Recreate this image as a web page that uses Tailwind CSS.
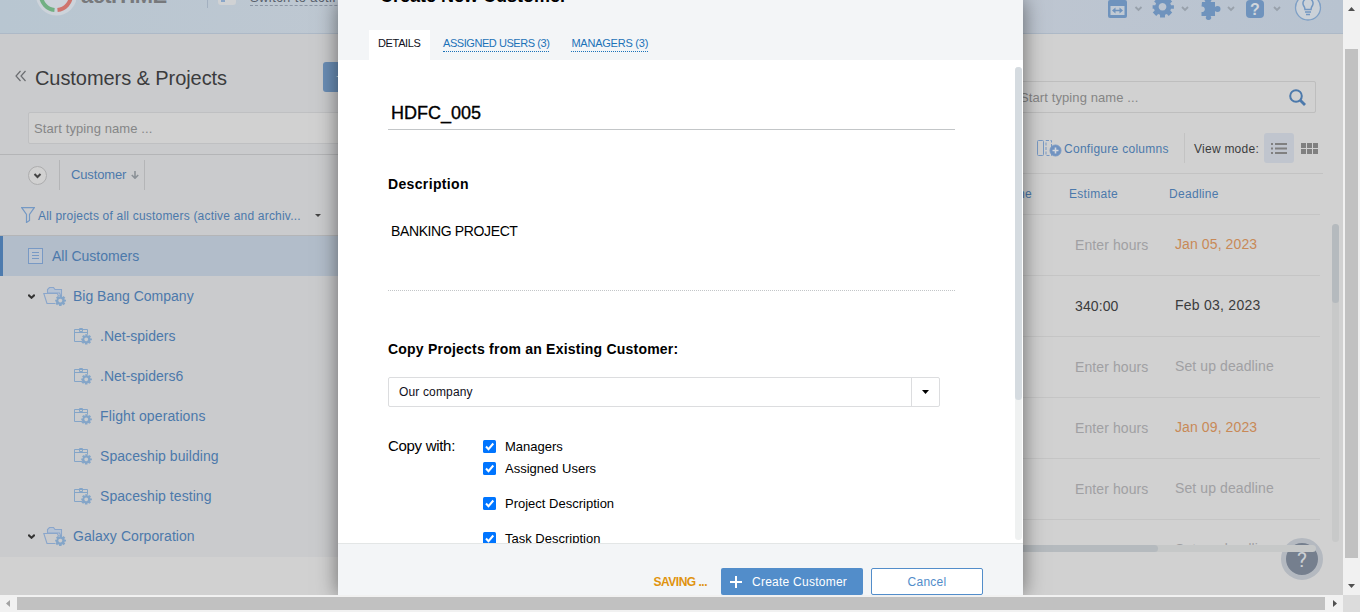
<!DOCTYPE html>
<html lang="en">
<head>
<meta charset="utf-8">
<title>actiTIME - Create New Customer</title>
<script src="https://cdn.jsdelivr.net/npm/@tailwindcss/browser@4"></script>
</head>
<body class="w-[1360px] h-[612px] overflow-hidden font-['Liberation_Sans',Arial,sans-serif] text-[13px] text-[#3b3c3d] whitespace-nowrap">
<svg class="hidden">
  <defs>
    <g id="cog"><path fill="currentColor" fill-rule="evenodd" d="M-1.300-5h2.600v1.400l1 .4 1-1 1.800 1.800-1 1 .4 1H6v1.800H4.500l-.4 1 1 1-1.800 1.800-1-1-1 .4V6h-2.600V4.600l-1-.4-1 1-1.800-1.800 1-1-.4-1H-5.200V-.4h1.400l.4-1-1-1 1.800-1.800 1 1 1-.4zM0-1.600a2 2 0 1 0 .01 0z"/></g>
    <g id="project" fill="none" stroke="#84a5c8" stroke-width="1"><path d="M8 13.500H.5V1.500h13v5M.5 4.500h13M5.500 .5v3h3v-3h-3z"/><g transform="translate(12.200 10.900) scale(.95)" color="#84a5c8" stroke="none"><use href="#cog"/></g></g>
    <g id="folder" fill="none" stroke="#8aa6cb" stroke-width="1.100"><path fill="#b5c2d4" d="M4.500 6V2.500l2-2h4l1.500 2h6.500v8l-2-4.500z"/><path fill="#cacbcd" d="M12 16.500H4L.8 6.500h13.500l1.500 3"/><g transform="translate(17.300 13.200) scale(.98)" color="#84a5c8" stroke="none"><use href="#cog"/></g></g>
    <path id="chev" d="M1 1l3 3 3-3" fill="none" stroke="#98a1ab" stroke-width="1.800"/>
    <path id="tri" d="M.3.800L3.500 3.800 6.700.800" fill="none" stroke="#333" stroke-width="2"/>
  </defs>
</svg>
<div class="grid grid-cols-[1343px_17px] grid-rows-[595px_17px]">
  <div class="relative flex flex-col overflow-hidden bg-[#d1d1d1]">
    <header class="flex h-[34px] shrink-0 items-end justify-between border-b border-[#adb9c7] bg-linear-to-r from-[#b8c6d1] via-[#c4c9d2] to-[#b8c3d0]">
      <div class="flex h-[52px] items-start pl-9">
        <svg class="h-[52px] w-10 shrink-0" viewBox="0 -19 40 52"><circle cx="20.500" cy="-5" r="20.500" fill="#cdd3da"/><g fill="none" stroke-width="4"><path d="M5 -5A15 15 0 0 0 18.500 10" stroke="#72b083"/><path d="M21.500 10A15 15 0 0 0 35 -5" stroke="#cf746d"/></g></svg>
        <span class="mt-[3px] ml-[5px] w-[126px] text-[22px] leading-6 font-bold tracking-[-0.6px] text-[#77797c]">actiTIME</span>
        <span class="h-[27px] border-l border-[#a3b0c0]"></span>
        <span class="mt-[6px] ml-[10px] flex h-[18px] w-[18px] items-end rounded-[3px] bg-[#d0d2d4] pb-[3px] pl-[3px]"><span class="h-2 w-1 bg-[#8aa6c8]"></span></span>
        <span class="mt-[9px] ml-[14px] border-b border-dashed border-[#8c96a5] text-[13px] leading-[15px] tracking-[0.4px] text-[#59606c]">Switch to actiPLANS</span>
      </div>
      <svg class="h-[34px] w-[250px] shrink-0" viewBox="1093 0 250 34">
        <g fill="#6f93bd" color="#6f93bd">
          <path d="M1108 3q0-2 2-2h15q2 0 2 2v14q0 2-2 2h-15q-2 0-2-2zM1111-3h3v5h-3zM1121-3h3v5h-3z"/><path d="M1110.500 7h14v9h-14z" fill="#c1cad4"/><path d="M1115.500 8.500l-3.500 3 3.500 3v-2.200h4v2.200l3.500-3-3.500-3v2.200h-4z"/>
          <g transform="translate(1162.500 7) scale(1.900)"><use href="#cog"/></g>
          <path d="M1202 3h3.500q-1-1-1-2.500a3.500 3.500 0 0 1 7 0q0 1.500-1 2.500h4.500v5q1-1 2.500-1a3 3 0 0 1 0 6q-1.500 0-2.500-1v5h-4.500q1 1 .6 2.500a2.900 2.900 0 0 1-5.200 0q-.4-1.500.6-2.500h-5v-4a2.800 2.800 0 1 0 0-5.500z"/>
          <rect x="1246" y="1" width="18" height="18" rx="4"/>
        </g>
        <text x="1255" y="15.500" text-anchor="middle" font-size="16" font-weight="700" fill="#d0d6dc">?</text>
        <g><use href="#chev" x="1134.500" y="7"/><use href="#chev" x="1181" y="7"/><use href="#chev" x="1227" y="7"/><use href="#chev" x="1273" y="7"/></g>
        <circle cx="1308" cy="8.500" r="12.500" fill="#cbd1d8" stroke="#7fa0c6" stroke-width="1.300"/>
        <path d="M1305 10.500q0-2-1.500-4a5 5 0 1 1 9 0q-1.500 2-1.500 4zM1305 13h6M1306 15.500h4" fill="none" stroke="#7397c1" stroke-width="1.500"/>
      </svg>
    </header>

    <div class="flex h-[561px]">
      <aside class="flex h-[523px] w-[560px] flex-col bg-[#cacbcd]">
        <div class="flex h-[78px] items-center pt-[9px] pl-[15px]">
          <svg class="mt-[-3px] h-3 w-[12px]" viewBox="0 0 12 12" fill="none" stroke="#6b6d70" stroke-width="1.200"><path d="M5.500 1L1 6l4.500 5M10.500 1L6 6l4.500 5"/></svg>
          <h1 class="ml-2 w-[288px] text-[20px] leading-6 tracking-[-0.07px]">Customers &amp; Projects</h1>
          <button class="mt-[-2px] flex h-[30px] w-24 items-center rounded-[3px] bg-[#6b8eb6] pl-[13px] text-[#d4d8dc]">+ Add New</button>
        </div>
        <div class="ml-7 flex h-[32px] w-[400px] items-center rounded-[2px] border border-[#bfc0c2] bg-[#d1d1d1] pt-[2px] pl-[5px] tracking-[0.1px] text-[#858687]">Start typing name ...</div>
        <div class="mt-[10px] flex h-[41px] items-center border-t border-[#b4b5b7] pl-7">
          <svg class="w-[19px] h-[19px]" viewBox="0 0 19 19"><circle cx="9.500" cy="9.500" r="9" fill="#d1d1d1" stroke="#adadae"/><path d="M6.500 8l3 3 3-3" fill="none" stroke="#444" stroke-width="2"/></svg>
          <div class="ml-3 flex h-[30px] w-[86px] items-center border-x border-[#b4b5b7] pl-[11px] text-[#4c79ab] tracking-[-0.15px]">Customer<svg class="ml-[5px] h-2 w-2" viewBox="0 0 8 8"><path d="M4 0v7M.8 4L4 7.200 7.200 4" fill="none" stroke="#8b9197" stroke-width="1.600"/></svg></div>
        </div>
        <div class="flex h-[40px] items-center pl-[21px] text-[#4c79ab]">
          <svg class="h-4 w-[14px]" viewBox="0 0 14 16" fill="none" stroke="#7599c4" stroke-width="1.200"><path d="M.7.700h12.600L8.500 7.500v6L5.500 15.500v-8z"/></svg>
          <span class="ml-[3px] w-[277px] pt-px text-[12px] tracking-[0.2px]">All projects of all customers (active and archiv...</span>
          <svg class="h-[3px] w-[6px]" viewBox="0 0 6 3"><path d="M0 0h6L3 3z" fill="#444"/></svg>
        </div>
        <div class="flex h-[41px] items-center border-t border-[#b4b5b7] bg-[#b2bdca] text-[14px] text-[#4c79ab]">
          <span class="h-full w-[3px] bg-[#4d7bae]"></span>
          <svg class="ml-[25px] h-4 w-[15px]" viewBox="0 0 15 16" fill="none" stroke="#7899c4" stroke-width="1"><rect x=".5" y=".5" width="14" height="15" fill="#bdc5d0"/><path d="M4 4.500h7M4 7.500h7M4 10.500h7"/></svg>
          <span class="ml-[9px]">All Customers</span>
        </div>
        <div class="flex h-10 items-center pl-7 text-[14px] text-[#4c79ab]"><svg class="h-[5px] w-[7px]" viewBox="0 0 7 5"><use href="#tri"/></svg><svg class="ml-2 h-[19px] w-[23px]" viewBox="0 0 23 19"><use href="#folder"/></svg><span class="ml-[7px]">Big Bang Company</span></div>
        <div class="flex h-10 items-center pl-[74px] text-[14px] text-[#4c79ab]"><svg class="h-[17px] w-[18px]" viewBox="0 0 18 17"><use href="#project"/></svg><span class="ml-[8px]">.Net-spiders</span></div>
        <div class="flex h-10 items-center pl-[74px] text-[14px] text-[#4c79ab]"><svg class="h-[17px] w-[18px]" viewBox="0 0 18 17"><use href="#project"/></svg><span class="ml-[8px]">.Net-spiders6</span></div>
        <div class="flex h-10 items-center pl-[74px] text-[14px] text-[#4c79ab]"><svg class="h-[17px] w-[18px]" viewBox="0 0 18 17"><use href="#project"/></svg><span class="ml-[8px] tracking-[0.12px]">Flight operations</span></div>
        <div class="flex h-10 items-center pl-[74px] text-[14px] text-[#4c79ab]"><svg class="h-[17px] w-[18px]" viewBox="0 0 18 17"><use href="#project"/></svg><span class="ml-[8px] tracking-[0.06px]">Spaceship building</span></div>
        <div class="flex h-10 items-center pl-[74px] text-[14px] text-[#4c79ab]"><svg class="h-[17px] w-[18px]" viewBox="0 0 18 17"><use href="#project"/></svg><span class="ml-[8px] tracking-[0.06px]">Spaceship testing</span></div>
        <div class="flex h-10 items-center pl-7 text-[14px] text-[#4c79ab]"><svg class="h-[5px] w-[7px]" viewBox="0 0 7 5"><use href="#tri"/></svg><svg class="ml-2 h-[19px] w-[23px]" viewBox="0 0 23 19"><use href="#folder"/></svg><span class="ml-[7px] tracking-[0.06px]">Galaxy Corporation</span></div>
      </aside>

      <main class="flex flex-1 flex-col items-end">
        <div class="mt-[47px] mr-[27px] flex h-[32px] w-[302px] shrink-0 items-center justify-between rounded-[2px] border border-[#bebebe] pr-[9px] pl-[5px] text-[#858585]">
          <span class="pt-[2px] tracking-[0.1px]">Start typing name ...</span>
          <svg class="h-[17px] w-[17px]" viewBox="0 0 17 17" fill="none" stroke="#4c79ab" stroke-width="2"><circle cx="7" cy="7" r="5.800"/><path d="M11 11l5 5" stroke-width="2.800"/></svg>
        </div>
        <div class="mt-[20px] mr-6 flex h-[41px] shrink-0 items-start pr-px">
          <div class="flex h-[30px] w-[147px] items-center text-[#4c79ab]">
            <svg class="h-[17px] w-[25px]" viewBox="0 0 25 17" fill="none" stroke="#7899c4"><rect x=".5" y=".5" width="6" height="15" rx="1"/><path d="M9 .5h5.500v15H9z" stroke-dasharray="3 1.500"/><circle cx="18.500" cy="10.500" r="5.500" fill="#7193c1"/><path d="M15.500 10.500h6M18.500 7.500v6" stroke="#d4d8de" stroke-width="1.600"/></svg>
            <span class="ml-[2px] pt-[2px] text-[12px] tracking-[0.28px]">Configure columns</span>
          </div>
          <div class="flex h-[30px] w-[80px] items-center border-l border-[#c3c3c3] pl-[9px]"><span class="pt-[2px] text-[12px] tracking-[0.25px]">View mode:</span></div>
          <span class="flex h-[30px] w-[30px] items-center justify-center rounded-[3px] bg-[#c0c5ce]"><svg class="h-[11px] w-4" viewBox="0 0 16 11" fill="#808080"><path d="M0 0h2v2H0zM4 0h12v2H4zM0 4.500h2v2H0zM4 4.500h12v2H4zM0 9h2v2H0zM4 9h12v2H4z"/></svg></span>
          <svg class="mt-[10px] ml-[7px] h-[11px] w-[17px]" viewBox="0 0 17 11" fill="#808080"><path d="M0 0h5v5H0zM6 0h5v5H6zM12 0h5v5h-5zM0 6h5v5H0zM6 6h5v5H6zM12 6h5v5h-5z"/></svg>
        </div>
        <div class="flex w-full flex-1 justify-end">
          <div class="flex w-[320px] flex-col">
            <div class="mr-[-3px] -mt-px border-t border-[#c3c3c3]"></div>
            <div class="grid h-[40px] grid-cols-[69px_100px_1fr] items-center text-[12px] tracking-[0.3px] text-[#4c79ab]"><span class="w-[32px] text-right">Time</span><span>Estimate</span><span>Deadline</span></div>
            <div class="h-[331px] overflow-hidden text-[14px] tracking-[0.1px] text-[#a0a0a3]">
              <div class="grid h-[61px] grid-cols-[100px_1fr] items-center border-t border-[#c5c5c5] pl-[75px]"><span>Enter hours</span><span class="pb-px text-[#c88957]">Jan 05, 2023</span></div>
              <div class="grid h-[61px] grid-cols-[100px_1fr] items-center border-t border-[#c5c5c5] pl-[75px] text-[#3b3c3d]"><span>340:00</span><span class="pb-px tracking-[0.25px]">Feb 03, 2023</span></div>
              <div class="grid h-[61px] grid-cols-[100px_1fr] items-center border-t border-[#c5c5c5] pl-[75px]"><span>Enter hours</span><span class="pb-px">Set up deadline</span></div>
              <div class="grid h-[61px] grid-cols-[100px_1fr] items-center border-t border-[#c5c5c5] pl-[75px]"><span>Enter hours</span><span class="pb-px text-[#c88957]">Jan 09, 2023</span></div>
              <div class="grid h-[61px] grid-cols-[100px_1fr] items-center border-t border-[#c5c5c5] pl-[75px]"><span>Enter hours</span><span class="pb-px">Set up deadline</span></div>
              <div class="grid h-[61px] grid-cols-[100px_1fr] items-center border-t border-[#c5c5c5] pl-[75px]"><span class="pt-[3px]">Enter hours</span><span class="pb-px">Set up deadline</span></div>
            </div>
            <div class="relative z-10 mr-[4px] h-[7px] rounded-full bg-[#c6c8c8]"><div class="h-full w-[158px] rounded-full bg-[#b5babe]"></div></div>
          </div>
          <div class="mt-[50px] mr-[4px] ml-[12px] h-[318px] w-[7px] rounded-full bg-[#c8c9c9]"><div class="h-[79px] rounded-full bg-[#b5babe]"></div></div>
        </div>
      </main>
    </div>
    <div class="absolute top-[538px] left-[1281px] flex h-[42px] w-[42px] items-center justify-center rounded-full border-[5px] border-[#b4b9c0] bg-[#757f8e] pt-[3px] font-['Roboto',sans-serif] text-[21px] text-[#ccd0d4]">?</div>

    <section class="absolute top-0 left-[338px] z-20 flex h-[595px] w-[685px] flex-col bg-white text-black shadow-[0_0_20px_rgba(0,0,0,0.5)]">
      <div class="flex h-[60px] shrink-0 flex-col justify-between bg-[#f3f5f7]">
        <h2 class="-mt-[14px] pl-[42px] text-[18px] leading-5 font-bold">Create New Customer</h2>
        <nav class="flex h-[30px] items-center pl-[31px] text-[11px] tracking-[-0.44px] text-[#1c72b8]">
          <span class="flex h-full w-[61px] items-center bg-white pb-[3px] pl-[9px] tracking-[-0.35px] text-[#101020]">DETAILS</span>
          <span class="ml-[13px] mb-[1px] h-[15px] border-b border-dotted border-[#1c72b8] leading-3">ASSIGNED USERS (3)</span>
          <span class="ml-[22px] mb-[1px] h-[15px] border-b border-dotted border-[#1c72b8] leading-3 tracking-[-0.23px]">MANAGERS (3)</span>
        </nav>
      </div>
      <div class="flex h-[483px] shrink-0 overflow-hidden">
        <div class="w-[677px] pl-[50px]">
          <div class="mt-[35px] flex h-[35px] w-[567px] items-center border-b border-[#c3c6c8] pt-[2px] pl-[3px] text-[18px] [-webkit-text-stroke:0.35px_#000]">HDFC_005</div>
          <div class="mt-[46px] text-[14px] leading-4 font-bold tracking-[0.35px]">Description</div>
          <div class="mt-[31px] h-[68px] w-[567px] border-b border-dotted border-[#c3c6c8] pl-[3px] text-[14px] leading-4 tracking-[-0.38px]">BANKING PROJECT</div>
          <div class="mt-[50px] text-[14px] leading-4 font-bold tracking-[0.22px]">Copy Projects from an Existing Customer:</div>
          <div class="mt-5 flex h-[30px] w-[552px] items-center justify-between rounded-[2px] border border-[#dcdddf] pl-[10px] text-[12px] text-[#101020] tracking-[0.15px]">Our company<span class="flex h-full w-[28px] items-center justify-center border-l border-[#dcdddf]"><svg class="h-1 w-[7px]" viewBox="0 0 7 4"><path d="M0 0h7L3.500 4z"/></svg></span></div>
          <div class="mt-[31px] flex">
            <div class="w-[95px] text-[15px] leading-4 tracking-[-0.3px]">Copy with:</div>
            <div class="flex flex-col text-[13px] leading-[18px]">
              <div class="flex h-[18px] items-center gap-[9px]"><svg class="mb-px h-[13px] w-[13px]" viewBox="0 0 13 13"><rect width="13" height="13" rx="1.500" fill="#0075ff"/><path d="M3 6.500l2.500 2.700L10.300 3.500" fill="none" stroke="#fff" stroke-width="2"/></svg>Managers</div>
              <div class="mt-1 flex h-[18px] items-center gap-[9px]"><svg class="mb-px h-[13px] w-[13px]" viewBox="0 0 13 13"><rect width="13" height="13" rx="1.500" fill="#0075ff"/><path d="M3 6.500l2.500 2.700L10.300 3.500" fill="none" stroke="#fff" stroke-width="2"/></svg>Assigned Users</div>
              <div class="mt-[17px] flex h-[18px] items-center gap-[9px]"><svg class="mb-px h-[13px] w-[13px]" viewBox="0 0 13 13"><rect width="13" height="13" rx="1.500" fill="#0075ff"/><path d="M3 6.500l2.500 2.700L10.300 3.500" fill="none" stroke="#fff" stroke-width="2"/></svg>Project Description</div>
              <div class="mt-[17px] flex h-[18px] items-center gap-[9px]"><svg class="mb-px h-[13px] w-[13px]" viewBox="0 0 13 13"><rect width="13" height="13" rx="1.500" fill="#0075ff"/><path d="M3 6.500l2.500 2.700L10.300 3.500" fill="none" stroke="#fff" stroke-width="2"/></svg>Task Description</div>
            </div>
          </div>
        </div>
        <div class="mt-[7px] h-[473px] w-[7px] rounded-full bg-[#eff1f1]"><div class="h-[333px] rounded-full bg-[#d5dbe0]"></div></div>
      </div>
      <div class="flex flex-1 items-end justify-end border-t border-[#e3e6e6] bg-[#f3f5f7] pr-10 text-[12px]">
        <span class="mr-[14px] flex h-[27px] items-center font-bold tracking-[-0.5px] text-[#e0930e]">SAVING ...</span>
        <button class="flex h-[27px] w-[142px] items-center rounded-[2px] bg-[#528dca] pl-[9px] tracking-[0.25px] text-white"><svg class="mr-[10px] h-3 w-3" viewBox="0 0 12 12"><path d="M0 6h12M6 0v12" stroke="#fff" stroke-width="2"/></svg>Create Customer</button>
        <button class="ml-2 h-[27px] w-[112px] rounded-[2px] border border-[#528dca] bg-white tracking-[0.25px] text-[#528dca]">Cancel</button>
      </div>
    </section>
  </div>

  <div class="flex flex-col items-center justify-between bg-[#f1f1f1] py-[7px]">
    <svg class="h-1 w-[7px]" viewBox="0 0 7 4"><path d="M0 4h7L3.500 0z" fill="#505050"/></svg>
    <div class="mt-[11px] h-[509px] w-[13px] bg-[#c1c1c1]"></div>
    <svg class="h-1 w-[7px]" viewBox="0 0 7 4"><path d="M0 0h7L3.500 4z" fill="#505050"/></svg>
  </div>
  <div class="flex items-center bg-[#f1f1f1]">
    <svg class="ml-[6px] h-[7px] w-1" viewBox="0 0 4 7"><path d="M4 0v7L0 3.500z" fill="#a3a3a3"/></svg>
    <div class="ml-[7px] h-[13px] w-[1308px] bg-[#c1c1c1]"></div>
    <svg class="ml-2 h-[7px] w-1" viewBox="0 0 4 7"><path d="M0 0v7l4-3.500z" fill="#505050"/></svg>
  </div>
  <div class="bg-[#dcdcdc]"></div>
</div>
</body>
</html>
